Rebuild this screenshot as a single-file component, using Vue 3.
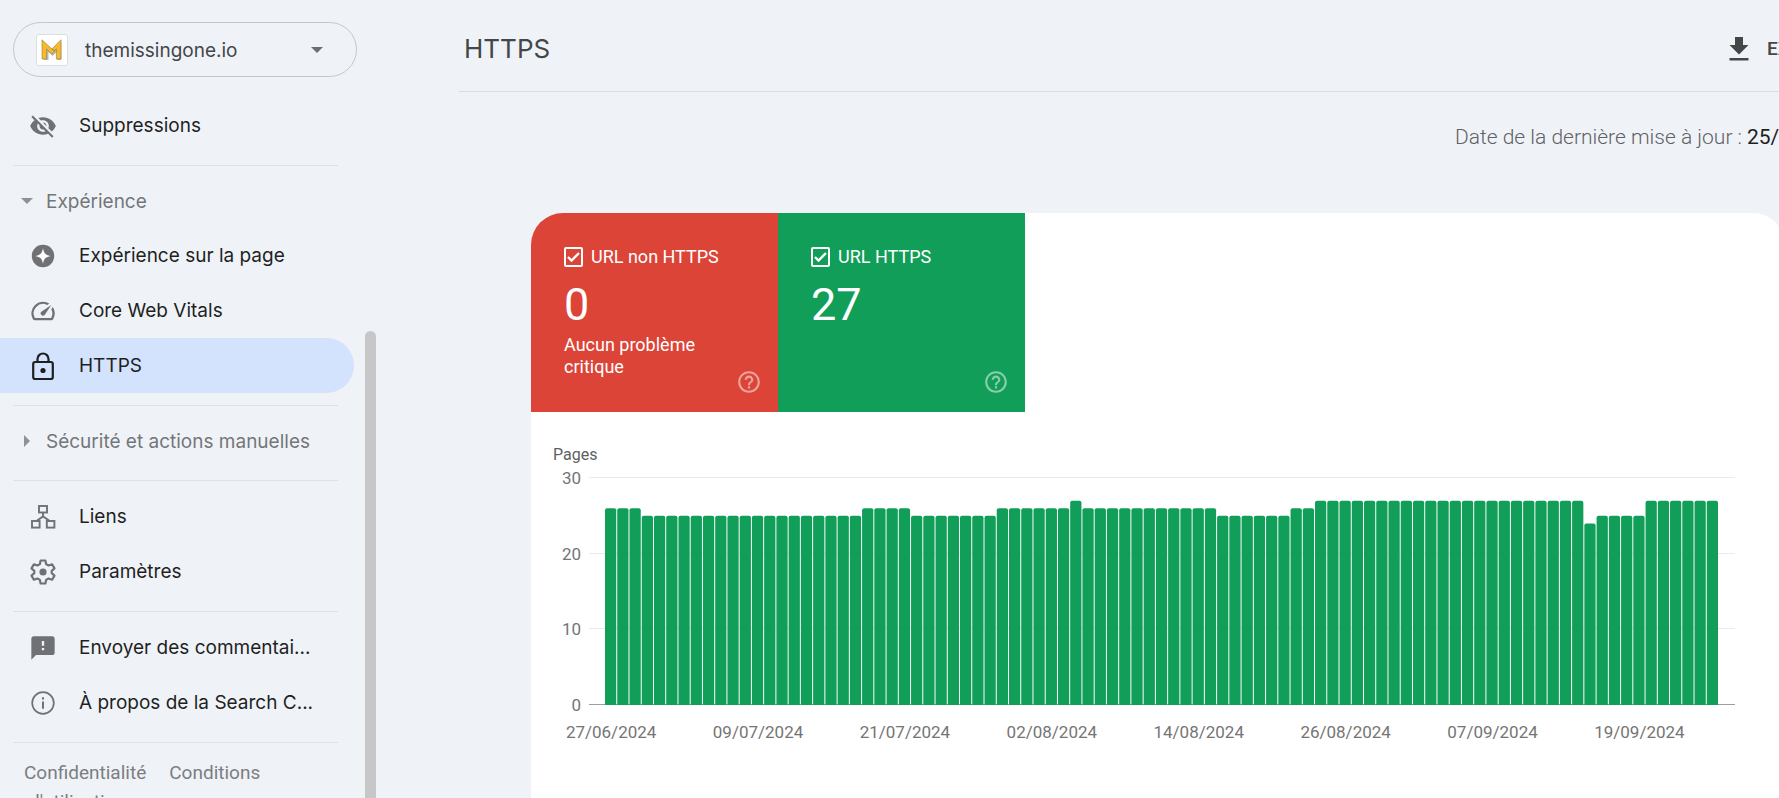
<script setup>
import { ref } from 'vue'

const navGroups = [
  { items: [{ label: 'Suppressions', icon: 'hidden' }] },
  {
    title: 'Expérience',
    open: true,
    items: [
      { label: 'Expérience sur la page', icon: 'star' },
      { label: 'Core Web Vitals', icon: 'gauge' },
      { label: 'HTTPS', icon: 'lock', active: true }
    ]
  },
  { title: 'Sécurité et actions manuelles', open: false, items: [] },
  {
    items: [
      { label: 'Liens', icon: 'links' },
      { label: 'Paramètres', icon: 'gear' }
    ]
  },
  {
    items: [
      { label: 'Envoyer des commentai...', icon: 'feedback' },
      { label: 'À propos de la Search C...', icon: 'info' }
    ]
  }
]

const tiles = ref([
  { id: 'non-https', label: 'URL non HTTPS', value: 0, note: 'Aucun problème critique', tone: 'red', checked: true },
  { id: 'https', label: 'URL HTTPS', value: 27, note: '', tone: 'green', checked: true }
])

const runs = [
  [3, 26], [18, 25], [4, 26], [7, 25], [6, 26], [1, 27], [11, 26],
  [6, 25], [2, 26], [22, 27], [1, 24], [4, 25], [6, 27]
]
const values = runs.flatMap(([count, value]) => Array(count).fill(value))
const step = 100 / values.length
const maxValue = 30
const ticks = [30, 20, 10, 0]
const dates = [
  '27/06/2024', '09/07/2024', '21/07/2024', '02/08/2024',
  '14/08/2024', '26/08/2024', '07/09/2024', '19/09/2024'
]
</script>

<template>
  <div class="app">
    <aside class="sidebar">
      <button class="property" type="button">
        <span class="favicon">
          <svg width="22" height="22" viewBox="0 0 22 22" aria-hidden="true">
            <path d="M2.300 2.500l8.700 8 8.700-8V20.500h-4.500v-8l-4.200 4-4.200-4v8H2.300z" fill="#b4bac0" transform="translate(.7 .5)" />
            <path d="M1 .800l9.800 9.200L20 .800V20h-4.600V9.800L10.800 15.200 5.600 10v10H1z" fill="#fbb829" stroke="#8d8048" stroke-width=".6" />
            <path d="M10.800 10l3.200 2" stroke="#8d8048" stroke-width=".9" />
          </svg>
        </span>
        <span class="property-name">themissingone.io</span>
        <svg class="property-arrow" width="12" height="6" viewBox="0 0 12 6" aria-hidden="true"><path d="M0 0h12L6 6z" fill="#6b6e71" /></svg>
      </button>

      <nav class="nav">
        <section v-for="(group, g) in navGroups" :key="g" class="group">
          <button v-if="group.title" class="group-title" type="button" :aria-expanded="group.open">
            <svg width="12" height="12" viewBox="0 0 12 12" aria-hidden="true">
              <path :d="group.open ? 'M0 3h12L6 9z' : 'M3 0v12l6-6z'" fill="#8f9194" />
            </svg>
            {{ group.title }}
          </button>
          <a v-for="item in group.items" :key="item.label" href="#" class="item" :class="{ active: item.active }">
            <svg v-if="item.icon === 'hidden'" width="28" height="28" viewBox="0 0 24 24" fill="#6f7174">
              <path d="M12 7c2.760 0 5 2.240 5 5 0 .65-.13 1.260-.36 1.830l2.920 2.920c1.510-1.260 2.700-2.890 3.430-4.750-1.730-4.390-6-7.500-11-7.500-1.400 0-2.740.25-3.980.7l2.160 2.160C10.740 7.130 11.350 7 12 7zM2 4.270l2.280 2.280.46.46C3.080 8.300 1.780 10.020 1 12c1.730 4.390 6 7.500 11 7.500 1.550 0 3.030-.3 4.380-.84l.42.42L19.730 22 21 20.730 3.270 3 2 4.270zM7.530 9.800l1.550 1.550c-.05.21-.08.43-.08.65 0 1.660 1.340 3 3 3 .22 0 .44-.03.65-.08l1.550 1.550c-.67.33-1.410.53-2.200.53-2.760 0-5-2.240-5-5 0-.79.2-1.530.53-2.200zm4.310-.78l3.150 3.150.02-.16c0-1.660-1.340-3-3-3l-.17.01z" />
            </svg>
            <svg v-else-if="item.icon === 'star'" width="28" height="28" viewBox="0 0 28 28">
              <circle cx="14" cy="14" r="11.200" fill="#6f7174" />
              <path d="M14 6.200c1 5.200 2.600 6.800 7.800 7.800-5.200 1-6.800 2.600-7.800 7.800-1-5.200-2.600-6.800-7.800-7.800 5.200-1 6.800-2.600 7.800-7.800z" fill="#fff" />
            </svg>
            <svg v-else-if="item.icon === 'gauge'" width="28" height="28" viewBox="0 0 24 24" fill="#6f7174">
              <path d="M20.380 8.570l-1.230 1.850a8 8 0 0 1-.22 7.580H5.070A8 8 0 0 1 15.580 6.850l1.850-1.230A10 10 0 0 0 3.350 19a2 2 0 0 0 1.720 1h13.850a2 2 0 0 0 1.740-1 10 10 0 0 0-.27-10.440zm-9.790 6.840a2 2 0 0 0 2.830 0l5.660-8.490-8.490 5.660a2 2 0 0 0 0 2.830z" />
            </svg>
            <svg v-else-if="item.icon === 'lock'" width="28" height="30" viewBox="0 0 28 30" fill="none" stroke="#1f1f1f" stroke-width="2.200">
              <rect x="4.200" y="11" width="19.600" height="17" rx="2" />
              <path d="M8.500 11V8a5.500 5.500 0 0 1 11 0v3" />
              <circle cx="14" cy="19.500" r="2.600" fill="#1f1f1f" stroke="none" />
            </svg>
            <svg v-else-if="item.icon === 'links'" width="28" height="28" viewBox="0 0 28 28" fill="none" stroke="#6f7174" stroke-width="1.900">
              <rect x="10" y="3" width="8" height="6.500" />
              <rect x="3" y="18" width="7.600" height="6.600" />
              <rect x="17.800" y="18" width="7.600" height="6.600" />
              <path d="M14 9.500v4.500M7.500 18L14 13.500 20.800 18" />
            </svg>
            <svg v-else-if="item.icon === 'gear'" width="28" height="28" viewBox="0 0 28 28">
              <path d="M11.600 2.500h4.800l.7 3.600 2.500 1.400 3.500-1.200 2.400 4.100-2.800 2.400v2.400l2.800 2.400-2.400 4.100-3.500-1.200-2.500 1.400-.7 3.600h-4.800l-.7-3.600-2.500-1.400-3.500 1.200-2.400-4.100 2.800-2.400v-2.400L2.500 10.400l2.400-4.100 3.500 1.200 2.500-1.400z" fill="none" stroke="#6f7174" stroke-width="2.200" stroke-linejoin="round" />
              <circle cx="14" cy="14" r="3.600" fill="#6f7174" />
            </svg>
            <svg v-else-if="item.icon === 'feedback'" width="28" height="28" viewBox="0 0 24 24" fill="#6f7174">
              <path d="M20 2H4c-1.100 0-1.990.9-1.990 2L2 22l4-4h14c1.100 0 2-.9 2-2V4c0-1.100-.9-2-2-2zm-7 12h-2v-2h2v2zm0-4h-2V6h2v4z" />
            </svg>
            <svg v-else width="28" height="28" viewBox="0 0 28 28">
              <circle cx="14" cy="14" r="10.800" fill="none" stroke="#6f7174" stroke-width="1.700" />
              <path d="M14 12.500v7.200M14 8.200v2.200" stroke="#6f7174" stroke-width="2" />
            </svg>
            <span class="item-label">{{ item.label }}</span>
          </a>
        </section>
        <footer class="legal">
          <a href="#">Confidentialité</a>
          <a href="#">Conditions d'utilisation</a>
        </footer>
      </nav>
      <div class="scrollbar"></div>
    </aside>

    <main class="main">
      <header class="header">
        <h1>HTTPS</h1>
        <button class="export" type="button">
          <svg width="24" height="28" viewBox="0 0 24 28" aria-hidden="true">
            <path d="M8 2h8v8h5.500L12 19.500 2.500 10H8zM2.500 23h19v2.500h-19z" fill="#444648" />
          </svg>
          EXPORTER
        </button>
      </header>
      <p class="updated"><span>Date de la dernière mise à jour :</span><time datetime="2024-09-25">25/09/2024</time></p>

      <section class="report">
        <div class="tiles">
          <article v-for="tile in tiles" :key="tile.id" class="tile" :class="tile.tone">
            <label class="tile-label" :for="tile.id">
              <span class="check">
                <input :id="tile.id" v-model="tile.checked" type="checkbox" />
                <svg v-if="tile.checked" width="20" height="20" viewBox="0 0 20 20" aria-hidden="true">
                  <path d="M4 10l3.500 3.500 7.500-7.500" fill="none" stroke="#fff" stroke-width="2.400" />
                </svg>
              </span>
              {{ tile.label }}
            </label>
            <strong class="tile-value">{{ tile.value }}</strong>
            <p class="tile-note">{{ tile.note }}</p>
            <button class="help" type="button" aria-label="Aide">
              <svg width="26" height="26" viewBox="0 0 24 24" fill="#fff" aria-hidden="true">
                <path d="M11 18h2v-2h-2v2zm1-16C6.480 2 2 6.480 2 12s4.480 10 10 10 10-4.480 10-10S17.520 2 12 2zm0 18c-4.410 0-8-3.590-8-8s3.590-8 8-8 8 3.590 8 8-3.590 8-8 8zm0-14c-2.210 0-4 1.790-4 4h2c0-1.100.9-2 2-2s2 .9 2 2c0 2-3 1.750-3 5h2c0-2.250 3-2.500 3-5 0-2.210-1.790-4-4-4z" />
              </svg>
            </button>
          </article>
        </div>

        <div class="chart">
          <h2>Pages</h2>
          <div class="chart-body">
            <div class="y-axis">
              <span v-for="tick in ticks" :key="tick">{{ tick }}</span>
            </div>
            <div class="plot">
              <div v-for="tick in ticks" :key="tick" class="grid-line" :class="{ base: tick === 0 }" :style="{ bottom: (tick / maxValue) * 100 + '%' }"></div>
              <svg class="bars" role="img" aria-label="Pages">
                <rect
                  v-for="(value, i) in values"
                  :key="i"
                  :x="i * step + '%'"
                  :y="(1 - value / maxValue) * 100 + '%'"
                  :width="step * 0.92 + '%'"
                  height="100%"
                  rx="2"
                  fill="#119e58"
                />
              </svg>
              <svg class="x-axis">
                <text v-for="(date, i) in dates" :key="date" :x="(i * 12 + 0.5) * step + '%'" y="18" text-anchor="middle">{{ date }}</text>
              </svg>
            </div>
          </div>
        </div>
      </section>
    </main>
  </div>
</template>

<style>
body {
  background: #eff3f8;
}
</style>

<style scoped>
.app {
  display: flex;
  height: 100vh;
  overflow: hidden;
  background: #eff3f8;
  color: #1f1f1f;
  font-family: Roboto, "Liberation Sans", sans-serif;
}
.app *,
.app *::before {
  box-sizing: border-box;
}
button {
  border: 0;
  padding: 0;
  background: none;
  font: inherit;
  color: inherit;
  cursor: pointer;
}
a {
  color: inherit;
  text-decoration: none;
}
.sidebar {
  position: relative;
  flex: none;
  width: 459px;
  padding-top: 22px;
  font-family: Inter, Roboto, sans-serif;
  font-size: 19px;
}
.property {
  display: flex;
  align-items: center;
  width: 344px;
  height: 55px;
  margin-left: 13px;
  padding: 0 33px 0 22px;
  border: 1px solid #c4c7c9;
  border-radius: 28px;
  color: #444648;
}
.favicon {
  display: grid;
  place-items: center;
  width: 32px;
  height: 32px;
  border: 1px solid #dcdfe2;
  border-radius: 3px;
  background: #fff;
}
.property-name {
  flex: 1;
  margin-left: 17px;
  padding-top: 2px;
  text-align: left;
}
.nav {
  margin-top: 21px;
}
.group::after {
  content: "";
  display: block;
  width: 325px;
  height: 1px;
  margin: 12px 0 8px 13px;
  background: #dfe2e5;
}
.group-title {
  display: flex;
  align-items: center;
  gap: 13px;
  height: 54px;
  padding-left: 21px;
  color: #747679;
  white-space: nowrap;
}
.item {
  display: flex;
  align-items: center;
  gap: 22px;
  width: 354px;
  height: 55px;
  padding-left: 29px;
  white-space: nowrap;
}
.item.active {
  border-radius: 0 28px 28px 0;
  background: #d3e2fd;
}
.item svg {
  flex: none;
}
.legal {
  width: 320px;
  padding: 7px 24px 0;
  color: #7b7e81;
  font-family: Roboto, sans-serif;
  font-size: 19px;
  line-height: 29px;
}
.legal a:first-child {
  margin-right: 18px;
}
.legal a + a {
  padding-left: 5px;
  -webkit-box-decoration-break: clone;
  box-decoration-break: clone;
}
.scrollbar {
  position: absolute;
  top: 331px;
  bottom: 0;
  left: 365px;
  width: 11px;
  border-radius: 6px 6px 0 0;
  background: #c7c7c7;
}
.main {
  flex: 1;
  min-width: 0;
  display: flex;
  flex-direction: column;
}
.header {
  display: flex;
  align-items: center;
  justify-content: space-between;
  flex: none;
  height: 92px;
  padding: 6px 0 0 5px;
  border-bottom: 1px solid #dcdfe0;
}
h1 {
  margin: 0;
  color: #444648;
  font-family: Inter, Roboto, sans-serif;
  font-size: 26px;
  font-weight: 400;
}
.export {
  display: flex;
  align-items: center;
  gap: 16px;
  width: 52px;
  color: #444648;
  font-size: 19px;
  font-weight: 500;
  white-space: nowrap;
}
.export svg {
  flex: none;
}
.updated {
  display: flex;
  justify-content: flex-end;
  gap: 5px;
  margin: 31px 0 61px;
  color: #5f6164;
  font-size: 21px;
  font-weight: 300;
  line-height: 29px;
  white-space: nowrap;
}
.updated time {
  width: 32px;
  color: #1f1f1f;
  font-weight: 400;
}
.report {
  flex: 1;
  margin: 0 -6px 0 72px;
  border-radius: 32px 32px 0 0;
  background: #fff;
}
.tiles {
  display: flex;
}
.tile {
  position: relative;
  width: 247px;
  height: 199px;
  padding: 33px;
  color: #fff;
  font-size: 18px;
}
.tile.red {
  border-top-left-radius: 32px;
  background: #dc4438;
}
.tile.green {
  background: #119e58;
}
.tile-label {
  display: flex;
  align-items: center;
  gap: 8px;
  line-height: 22px;
}
.check {
  display: grid;
  width: 19px;
  height: 20px;
}
.check > * {
  grid-area: 1 / 1;
}
.check input {
  appearance: none;
  width: 19px;
  height: 20px;
  margin: 0;
  border: 2px solid #fff;
  border-radius: 2px;
}
.check svg {
  pointer-events: none;
}
.tile-value {
  display: block;
  margin-top: 10px;
  font-size: 45px;
  font-weight: 400;
  line-height: 54px;
}
.tile-note {
  margin: 2px 0 0;
  line-height: 22px;
}
.help {
  position: absolute;
  right: 16px;
  bottom: 17px;
  height: 26px;
  opacity: 0.5;
}
.chart {
  padding: 32px 50px 0 22px;
  color: #757575;
  font-size: 17px;
}
h2 {
  margin: 0;
  color: #5f6062;
  font-size: 16px;
  font-weight: 400;
  line-height: 22px;
}
.chart-body {
  display: flex;
  gap: 8px;
  margin-top: 12px;
}
.y-axis {
  display: flex;
  flex-direction: column;
  justify-content: space-between;
  width: 28px;
  height: 247px;
  margin-top: -10px;
  line-height: 20px;
  text-align: right;
}
.plot {
  position: relative;
  flex: 1;
  height: 227px;
  padding: 0 16px;
}
.grid-line {
  position: absolute;
  right: 0;
  left: 0;
  height: 1px;
  background: #ebebeb;
}
.grid-line.base {
  background: #9e9e9e;
}
.bars {
  position: relative;
  display: block;
  width: 100%;
  height: 100%;
}
.x-axis {
  display: block;
  width: 100%;
  height: 30px;
  margin-top: 15px;
  overflow: visible;
  fill: #757575;
}
</style>
